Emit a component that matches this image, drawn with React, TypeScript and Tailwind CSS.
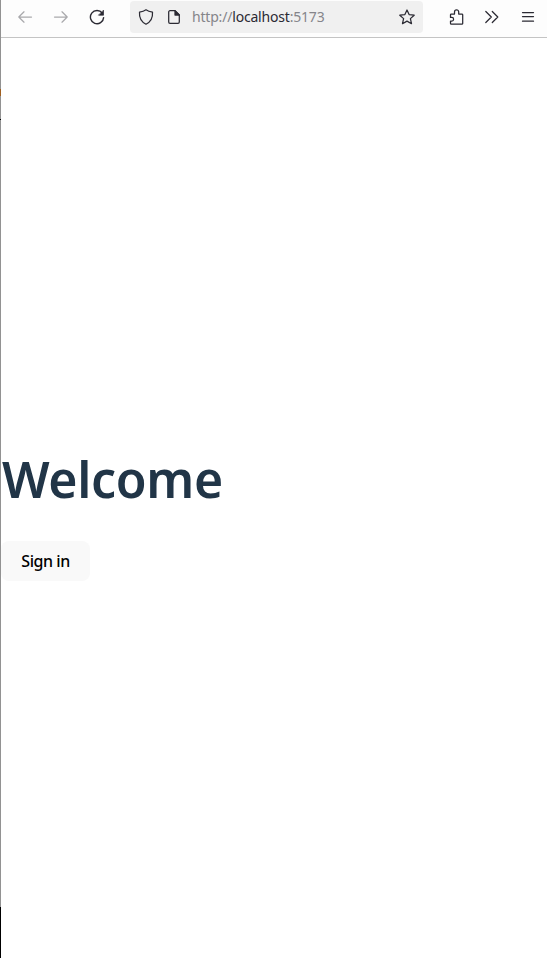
import type { ReactNode } from "react";

function Icon({ children, className = "" }: { children: ReactNode; className?: string }) {
  return (
    <svg
      width="16"
      height="16"
      viewBox="0 0 16 16"
      fill="none"
      stroke="currentColor"
      strokeWidth="1.25"
      strokeLinecap="round"
      strokeLinejoin="round"
      className={"shrink-0 " + className}
    >
      {children}
    </svg>
  );
}

function Toolbar() {
  return (
    <header className="flex h-[38px] shrink-0 items-start border-b border-[#c4c4c4] bg-[#fdfdfd] text-[#2b2a33]">
      <div className="flex h-[34px] w-[129px] items-center gap-5 pl-4">
        <Icon className="text-[#a9a9ac]">
          <path d="M14.5 8H1.8M7 2.8 1.8 8 7 13.2" />
        </Icon>
        <Icon className="text-[#a9a9ac]">
          <path d="M1.5 8h12.7M9 2.8 14.2 8 9 13.2" />
        </Icon>
        <Icon>
          <path d="M13.3 4.2A6.6 6.6 0 1 0 14.6 8.6" strokeWidth="1.4" />
          <path d="M14.5 1.5v4.7H9.8z" fill="currentColor" strokeWidth=".7" />
        </Icon>
      </div>
      <div className="mt-px flex h-8 w-[293px] items-center rounded bg-[#f0f0f0] px-2">
        <Icon>
          <path d="M8 .8c2 1.5 4.1 2 6.5 2.3.4 5.2-1.7 9.7-6.5 12.1C3.2 12.8 1.1 8.3 1.5 3.1 3.9 2.8 6 2.3 8 .8z" />
        </Icon>
        <Icon className="ml-3">
          <path d="M4 1.7h5L13.3 6v7a1.3 1.3 0 0 1-1.3 1.3H4A1.3 1.3 0 0 1 2.7 13V3A1.3 1.3 0 0 1 4 1.7z" />
          <path d="M9 1.7V6h4.3z" fill="currentColor" />
        </Icon>
        <div className="ml-[10px] flex-1 whitespace-nowrap font-['Noto_Sans','Open_Sans',sans-serif] text-[14px] leading-5 tracking-[-0.19px] text-[#85858a]">
          http://<span className="text-[#2b2a33]">localhost</span>:5173
        </div>
        <Icon>
          <path d="m8 1 2.1 4.6 5.1.6-3.8 3.4 1.1 5.1L8 12.1l-4.5 2.6 1.1-5.1L.8 6.2l5.1-.6z" />
        </Icon>
      </div>
      <div className="flex h-[34px] flex-1 items-center justify-end gap-5 pr-[11px]">
        <Icon>
          <path d="M3.3 15.2h10.6a.8.8 0 0 0 .8-.8V5.8a.8.8 0 0 0-.8-.8h-3.2V3a2.1 2.1 0 0 0-4.2 0v2H3.3a.8.8 0 0 0-.8.8v2.6h1.3a1.8 1.8 0 0 1 0 3.6H2.5v2.4a.8.8 0 0 0 .8.8z" />
        </Icon>
        <Icon>
          <path d="M1.8 2.5 7.3 8l-5.5 5.5M8.3 2.5 13.8 8l-5.5 5.5" />
        </Icon>
        <Icon>
          <path d="M2.5 3.5h11M2.5 7.500h11M2.500 12.200h11" />
        </Icon>
      </div>
    </header>
  );
}

export default function App() {
  return (
    <div className="flex h-[958px] w-[547px] overflow-hidden bg-white font-['Noto_Sans','Open_Sans',sans-serif]">
      <div className="flex w-px shrink-0 flex-col bg-[#929292]">
        <div className="mt-[89px] h-[7px] bg-[#a06020]" />
        <div className="mt-[23px] h-px bg-black" />
        <div className="mt-auto h-[51px] bg-black" />
      </div>
      <div className="flex min-w-0 flex-1 flex-col">
        <Toolbar />
        <main className="flex flex-1 flex-col items-start pt-[413px]">
          <h1 className="h-[56px] whitespace-nowrap pl-px text-[50px] leading-[56px] font-[650] tracking-[-0.35px] text-[#213547]">
            Welcome
          </h1>
          <button className="mt-[34px] flex h-10 w-[89px] items-center justify-center rounded-lg bg-[#f9f9f9] text-[16px] leading-6 font-medium tracking-[-0.45px] text-black">
            Sign in
          </button>
        </main>
      </div>
    </div>
  );
}
